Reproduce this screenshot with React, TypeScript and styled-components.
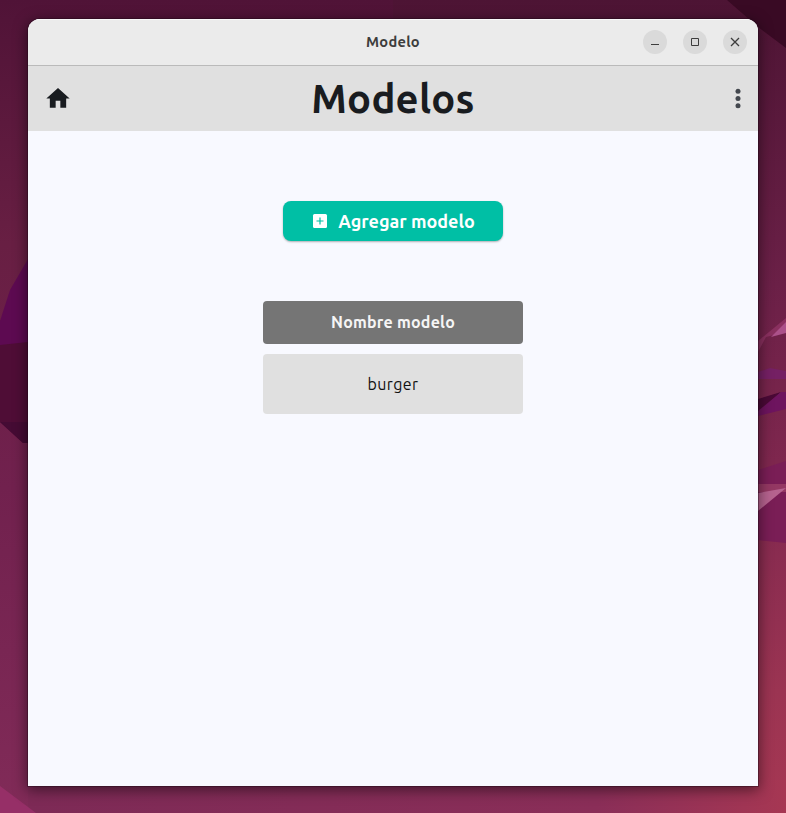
import React from "react";
import styled, { createGlobalStyle } from "styled-components";

const GlobalStyle = createGlobalStyle`
  * { box-sizing: border-box; }
  html, body { margin: 0; padding: 0; overflow: hidden; }
  body { font-family: Ubuntu, "Noto Sans", sans-serif; }
  button { font-family: inherit; border: 0; padding: 0; }
`;

const Desktop = styled.div`
  position: relative;
  width: 786px;
  height: 813px;
  padding: 19px 28px 27px;
  overflow: hidden;
  background: #6d1f46;
`;

const Wallpaper = styled.svg`
  position: absolute;
  inset: 0;
`;

const AppWindow = styled.main`
  position: relative;
  display: flex;
  flex-direction: column;
  height: 767px;
  border-radius: 12px 12px 0 0;
  overflow: hidden;
  background: #f8f9ff;
`;

const WindowShadow = styled.div`
  position: relative;
  border-radius: 12px 12px 0 0;
  box-shadow: 0 0 0 1px rgba(25, 5, 20, 0.35), 0 3px 14px 1px rgba(0, 0, 0, 0.5);
`;

const TitleBar = styled.header`
  display: grid;
  grid-template-columns: 1fr auto 1fr;
  align-items: center;
  height: 47px;
  flex: none;
  padding: 0 11px;
  background: #ebebeb;
  border-bottom: 1px solid #bababa;
  box-shadow: inset 0 1px #f9f9f9;
`;

const WindowTitle = styled.div`
  grid-column: 2;
  font-size: 14.67px;
  line-height: 20px;
  font-weight: 700;
  color: #3d3d3d;
  letter-spacing: 0.25px;
`;

const WindowControls = styled.div`
  display: flex;
  justify-content: flex-end;
  gap: 16px;
`;

const ControlButton = styled.button`
  display: grid;
  place-items: center;
  width: 24px;
  height: 24px;
  border-radius: 50%;
  background: #dadada;
  color: #3d3d3d;
  svg { display: block; }
`;

const AppBar = styled.div`
  display: grid;
  grid-template-columns: 60px 1fr 60px;
  align-items: center;
  height: 65px;
  flex: none;
  background: #e0e0e0;
`;

const IconButton = styled.button<{ $end?: boolean }>`
  display: flex;
  justify-content: ${(p) => (p.$end ? "flex-end" : "center")};
  padding-right: ${(p) => (p.$end ? "8px" : "0")};
  background: none;
  color: ${(p) => (p.$end ? "#43474e" : "#191c20")};
`;

const PageTitle = styled.h1`
  margin: 0;
  text-align: center;
  color: #191c20;
  font-size: 40px;
  line-height: 56px;
  font-weight: 700;
  letter-spacing: 0.25px;
`;

const Content = styled.section`
  display: flex;
  flex-direction: column;
  align-items: center;
  padding-top: 70px;
`;

const AddButton = styled.button`
  display: flex;
  align-items: center;
  justify-content: center;
  gap: 9px;
  width: 220px;
  height: 40px;
  border-radius: 8px;
  background: #00bfa5;
  color: #fff;
  font-size: 18px;
  line-height: 24px;
  font-weight: 600;
  letter-spacing: 0;
  box-shadow: 0 1px 2px rgba(0, 0, 0, 0.3);
`;

const ModelList = styled.div`
  display: flex;
  flex-direction: column;
  gap: 10px;
  width: 260px;
  margin-top: 60px;
`;

const ListCell = styled.div<{ $heading?: boolean }>`
  display: flex;
  align-items: center;
  justify-content: center;
  height: ${(p) => (p.$heading ? "43px" : "60px")};
  padding-bottom: ${(p) => (p.$heading ? "1px" : "0")};
  border-radius: 4px;
  background: ${(p) => (p.$heading ? "#757575" : "#e0e0e0")};
  color: ${(p) => (p.$heading ? "#f5f5f5" : "#111")};
  font-size: 16px;
  line-height: 22px;
  font-weight: ${(p) => (p.$heading ? 600 : 400)};
  letter-spacing: ${(p) => (p.$heading ? "0.22px" : "0.4px")};
`;

function DesktopBackdrop() {
  return (
    <Wallpaper width="786" height="813" viewBox="0 0 786 813" aria-hidden="true">
      <defs>
        <linearGradient id="left" x1="0" y1="0" x2="0" y2="1">
          <stop offset="0" stopColor="#501337" />
          <stop offset=".3" stopColor="#681f43" />
          <stop offset=".6" stopColor="#71214e" />
          <stop offset="1" stopColor="#812b58" />
        </linearGradient>
        <linearGradient id="right" x1="0" y1="0" x2="0" y2="1">
          <stop offset="0" stopColor="#4d1434" />
          <stop offset=".35" stopColor="#6b2047" />
          <stop offset=".6" stopColor="#81284f" />
          <stop offset=".85" stopColor="#9b3452" />
          <stop offset="1" stopColor="#a63753" />
        </linearGradient>
        <linearGradient id="bottom" x1="0" y1="0" x2="1" y2="0">
          <stop offset="0" stopColor="#7d2a56" />
          <stop offset=".75" stopColor="#8a2e58" />
          <stop offset="1" stopColor="#a63753" />
        </linearGradient>
      </defs>
      <path fill="url(#left)" d="M0 0h393v813H0z" />
      <path fill="url(#right)" d="M393 0h393v813H393z" />
      <path fill="url(#bottom)" d="M28 780h758v33H28z" />
      <path fill="#390a24" d="M727 0h59v48L758 27z" />
      <path fill="#5d0a51" d="M0 321 10 290 28 259v84L0 346z" />
      <path fill="#4f0d36" d="M0 345 28 342v101H23L0 422z" />
      <path fill="#450b34" d="M0 422h28v21h-5z" />
      <path fill="#8a305f" d="m758 341 28-23v14l-20 5-8 15z" />
      <path fill="#ac518a" d="m771 337 15-15v11z" />
      <path fill="#752064" d="m758 372 12-4 16 3v8h-28z" />
      <path fill="#4a0936" d="m758 399 23-7-23 21z" />
      <path fill="#6e145f" d="m758 411 23-19h5v17l-28 7z" />
      <path fill="#7a1e56" d="m758 470 28-9v82l-28-3z" />
      <path fill="#943863" d="M758 484h28v8h-28z" />
      <path fill="#b6638f" d="m758 493 28-5-28 23z" />
      <path fill="#962f67" d="M0 786 36 813H0z" />
    </Wallpaper>
  );
}

export default function App() {
  return (
    <>
      <GlobalStyle />
      <Desktop>
        <DesktopBackdrop />
        <WindowShadow>
          <AppWindow>
            <TitleBar>
              <WindowTitle>Modelo</WindowTitle>
              <WindowControls>
                <ControlButton aria-label="Minimizar">
                  <svg width="16" height="16" fill="currentColor"><path d="M4 10h8v1H4z" /></svg>
                </ControlButton>
                <ControlButton aria-label="Maximizar">
                  <svg width="16" height="16" fill="none" stroke="currentColor"><path d="M4.5 4.5h7v7h-7z" /></svg>
                </ControlButton>
                <ControlButton aria-label="Cerrar">
                  <svg width="16" height="16" fill="none" stroke="currentColor" strokeWidth="1.3"><path d="m4 4 8 8m0-8-8 8" /></svg>
                </ControlButton>
              </WindowControls>
            </TitleBar>
            <AppBar>
              <IconButton aria-label="Inicio">
                <svg width="28" height="28" viewBox="0 0.4 24 24" fill="currentColor"><path d="M10 20v-6h4v6h5v-8h3L12 3 2 12h3v8z" /></svg>
              </IconButton>
              <PageTitle>Modelos</PageTitle>
              <IconButton $end aria-label="Más opciones">
                <svg width="24" height="28" viewBox="0 0.7 24 28" fill="currentColor">
                  <circle cx="12" cy="7" r="2.5" />
                  <circle cx="12" cy="14.2" r="2.5" />
                  <circle cx="12" cy="21.4" r="2.5" />
                </svg>
              </IconButton>
            </AppBar>
            <Content>
              <AddButton>
                <svg width="18" height="18" viewBox="0 0 18 18">
                  <rect x="2" y="2" width="14" height="14" rx="1.5" fill="#fff" />
                  <path d="M9 5.5v7M5.5 9h7" stroke="#00bfa5" strokeWidth="1.2" />
                </svg>
                <span>Agregar modelo</span>
              </AddButton>
              <ModelList>
                <ListCell $heading>Nombre modelo</ListCell>
                <ListCell>burger</ListCell>
              </ModelList>
            </Content>
          </AppWindow>
        </WindowShadow>
      </Desktop>
    </>
  );
}
